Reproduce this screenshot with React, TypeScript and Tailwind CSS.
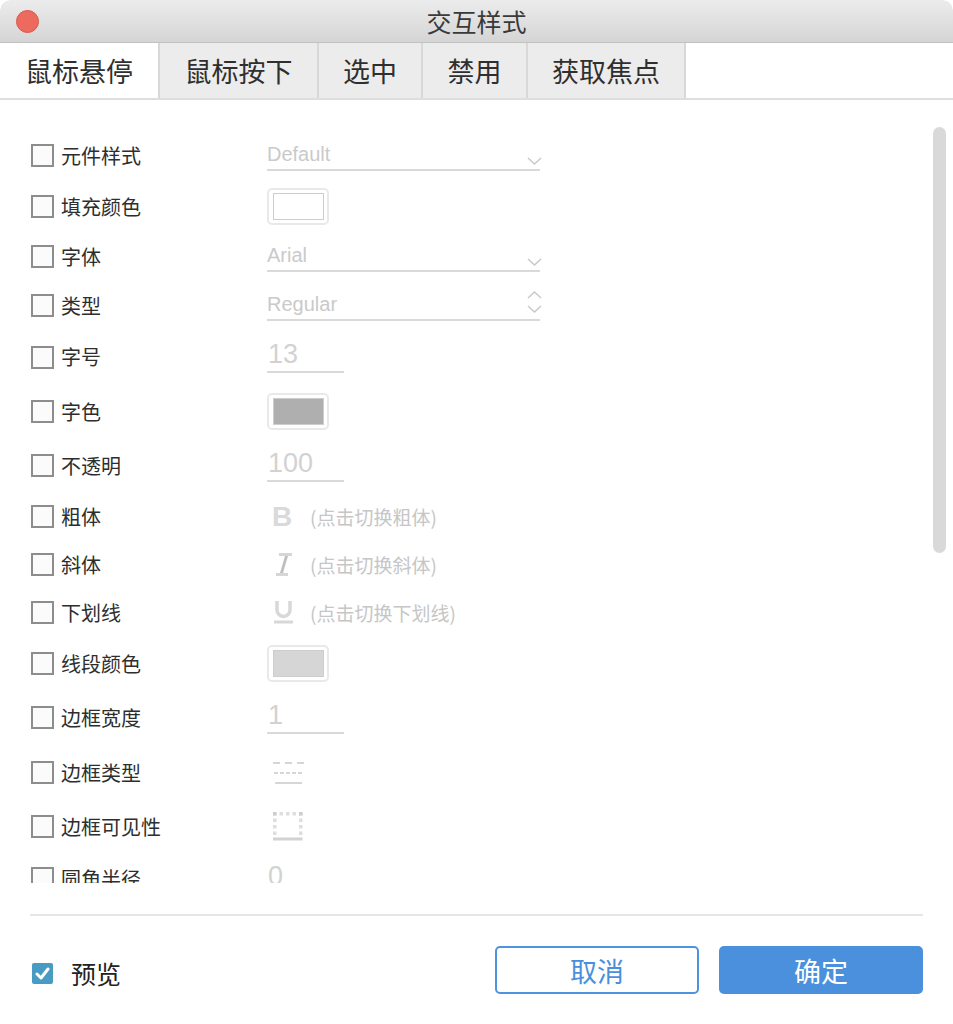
import React from "react";

const cjk = "font-['Noto_Sans_CJK_SC','Liberation_Sans',sans-serif]";
const latin = "font-['Liberation_Sans',sans-serif]";

function ChevronDown() {
  return (
    <svg width="15" height="8" viewBox="0 0 15 8" className="block">
      <polyline points="1,1 7.5,7 14,1" fill="none" stroke="#c9c9c9" strokeWidth="1.5" />
    </svg>
  );
}

function ChevronUp() {
  return (
    <svg width="15" height="8" viewBox="0 0 15 8" className="block">
      <polyline points="1,7 7.5,1 14,7" fill="none" stroke="#c9c9c9" strokeWidth="1.5" />
    </svg>
  );
}

function Dropdown({ value }: { value: string }) {
  return (
    <div className="w-[273px] h-[30px] border-b-2 border-[#d9d9d9] flex justify-between">
      <span className={`${latin} pt-[3px] text-[20px] leading-none text-[#cacaca]`}>{value}</span>
      <div className="mt-[16px] -mr-[2px]">
        <ChevronDown />
      </div>
    </div>
  );
}

function Stepper({ value }: { value: string }) {
  return (
    <div className="w-[273px] h-[30px] border-b-2 border-[#d9d9d9] flex justify-between">
      <span className={`${latin} pt-[3px] text-[20px] leading-none text-[#cacaca]`}>{value}</span>
      <div className="flex flex-col gap-[6px] -mr-[2px]">
        <ChevronUp />
        <ChevronDown />
      </div>
    </div>
  );
}

function NumberInput({ value }: { value: string }) {
  return (
    <div className="w-[77px] h-[32px] border-b-2 border-[#d9d9d9]">
      <span className={`${latin} block pl-[1px] text-[27px] leading-none text-[#d2d2d2]`}>{value}</span>
    </div>
  );
}

function Swatch({ fill }: { fill: string }) {
  return (
    <div className="w-[62px] h-[37px] rounded-[5px] border-2 border-[#e9e9e9] bg-white flex items-center justify-center">
      <div className={`w-[51px] h-[27px] border border-[#cdcdcd] ${fill}`} />
    </div>
  );
}

function Hint({ icon, text }: { icon: React.ReactNode; text: string }) {
  return (
    <div className="flex items-center">
      <div className="w-[43px] pl-[5px] flex items-center">{icon}</div>
      <span className={`${cjk} text-[19px] leading-none text-[#c6c6c6]`}>{text}</span>
    </div>
  );
}

function BoldIcon() {
  return <span className={`${latin} text-[28px] font-bold leading-none text-[#dadada]`}>B</span>;
}

function ItalicIcon() {
  return (
    <svg width="18" height="23" viewBox="0 0 18 23" className="block ml-[3px]">
      <rect x="4" y="0" width="13" height="3" fill="#d6d6d6" />
      <polygon points="10,3 13,3 8,20 5,20" fill="#bfbfbf" />
      <rect x="1" y="20" width="12" height="3" fill="#d6d6d6" />
    </svg>
  );
}

function UnderlineIcon() {
  return (
    <svg width="19" height="23" viewBox="0 0 19 23" className="block ml-[2px]">
      <path d="M3 0 V9 A6.5 6.5 0 0 0 16 9 V0" fill="none" stroke="#d8d8d8" strokeWidth="3.5" />
      <rect x="0" y="19.5" width="19" height="3" fill="#d8d8d8" />
    </svg>
  );
}

function BorderTypeIcon() {
  return (
    <svg width="32" height="24" viewBox="0 0 32 24" className="block ml-[6px]">
      <g fill="#d6d6d6">
        <rect x="0" y="1" width="7" height="2" />
        <rect x="12" y="1" width="7" height="2" />
        <rect x="24" y="1" width="7" height="2" />
        <rect x="1" y="11" width="4" height="2" />
        <rect x="7" y="11" width="4" height="2" />
        <rect x="13" y="11" width="4" height="2" />
        <rect x="19" y="11" width="4" height="2" />
        <rect x="25" y="11" width="4" height="2" />
        <rect x="2" y="21" width="27" height="2" />
      </g>
    </svg>
  );
}

function BorderVisibleIcon() {
  const dots = [];
  for (let i = 0; i < 5; i++) dots.push(<rect key={"t" + i} x={i * 6.5} y="0" width="3.5" height="3.5" />);
  for (let i = 1; i < 4; i++) {
    dots.push(<rect key={"l" + i} x="0" y={i * 6.5} width="3.5" height="3.5" />);
    dots.push(<rect key={"r" + i} x="26" y={i * 6.5} width="3.5" height="3.5" />);
  }
  return (
    <svg width="30" height="29" viewBox="0 0 30 29" className="block ml-[6px]">
      <g fill="#dedede">{dots}</g>
      <rect x="0" y="0" width="3.5" height="3.5" fill="#cdcdcd" />
      <rect x="26" y="0" width="3.5" height="3.5" fill="#cdcdcd" />
      <rect x="0" y="25.5" width="29.5" height="3" fill="#d2d2d2" />
    </svg>
  );
}

type Row = { label: string; h: string; ctrl: React.ReactNode };

const rows: Row[] = [
  { label: "元件样式", h: "h-[51px]", ctrl: <Dropdown value="Default" /> },
  { label: "填充颜色", h: "h-[51px]", ctrl: <Swatch fill="bg-white" /> },
  { label: "字体", h: "h-[49px]", ctrl: <Dropdown value="Arial" /> },
  { label: "类型", h: "h-[49px]", ctrl: <Stepper value="Regular" /> },
  { label: "字号", h: "h-[54px]", ctrl: <NumberInput value="13" /> },
  { label: "字色", h: "h-[55px]", ctrl: <Swatch fill="bg-[#afafaf]" /> },
  { label: "不透明", h: "h-[53px]", ctrl: <NumberInput value="100" /> },
  { label: "粗体", h: "h-[49px]", ctrl: <Hint icon={<BoldIcon />} text="(点击切换粗体)" /> },
  { label: "斜体", h: "h-[47px]", ctrl: <Hint icon={<ItalicIcon />} text="(点击切换斜体)" /> },
  { label: "下划线", h: "h-[49px]", ctrl: <Hint icon={<UnderlineIcon />} text="(点击切换下划线)" /> },
  { label: "线段颜色", h: "h-[53px]", ctrl: <Swatch fill="bg-[#d6d6d6]" /> },
  { label: "边框宽度", h: "h-[55px]", ctrl: <NumberInput value="1" /> },
  { label: "边框类型", h: "h-[55px]", ctrl: <BorderTypeIcon /> },
  { label: "边框可见性", h: "h-[53px]", ctrl: <BorderVisibleIcon /> },
  { label: "圆角半径", h: "h-[51px]", ctrl: <NumberInput value="0" /> },
];

const tabs = [
  { name: "鼠标悬停", w: "w-[160px]", active: true },
  { name: "鼠标按下", w: "w-[159px]", active: false },
  { name: "选中", w: "w-[104px]", active: false },
  { name: "禁用", w: "w-[105px]", active: false },
  { name: "获取焦点", w: "w-[158px]", active: false },
];

export default function App() {
  return (
    <div className={`${cjk} w-[953px] h-[1024px] bg-white flex flex-col overflow-hidden rounded-t-[10px]`}>
      {/* title bar */}
      <div className="relative h-[43px] shrink-0 bg-gradient-to-b from-[#ececec] to-[#d5d5d5] border-b border-[#c2c2c2] flex items-center justify-center rounded-t-[10px]">
        <div className="absolute left-[16px] top-[10px] w-[23px] h-[23px] rounded-full bg-[#ed6a5e] border border-[#d9584c]" />
        <span className="text-[25px] leading-none text-[#3a3a3a]">交互样式</span>
      </div>

      {/* tabs */}
      <div className="h-[57px] shrink-0 flex border-b-2 border-[#dedede] bg-white">
        {tabs.map((t) => (
          <div
            key={t.name}
            className={`${t.w} h-full flex items-center justify-center border-r-2 border-[#d8d8d8] text-[27px] leading-none text-[#2f2f2f] ${
              t.active ? "bg-white" : "bg-[#ececec]"
            }`}
          >
            {t.name}
          </div>
        ))}
      </div>

      {/* property list, clipped like the scroll view */}
      <div className="h-[783px] shrink-0 flex overflow-hidden">
        <div className="flex-1 flex flex-col pt-[30px] pl-[31px]">
          {rows.map((r) => (
            <div key={r.label} className={`${r.h} shrink-0 flex items-center`}>
              <div className="w-[23px] h-[23px] border-2 border-[#8d8d8d] bg-[#fbfbfb] shrink-0" />
              <span className="ml-[7px] w-[206px] text-[20px] leading-none text-[#2e2e2e]">{r.label}</span>
              {r.ctrl}
            </div>
          ))}
        </div>
        <div className="w-[13px] h-[426px] mt-[27px] mr-[7px] rounded-full bg-[#d9d9d9]" />
      </div>

      <div className="mt-[31px] mx-[30px] h-[2px] bg-[#e6e6e6] shrink-0" />

      {/* footer */}
      <div className="pt-[30px] pl-[32px] pr-[30px] flex items-center">
        <div className="mt-[7px] flex items-center">
          <div className="w-[21px] h-[21px] rounded-[2px] bg-[#4a9bc4] flex items-center justify-center">
            <svg width="15" height="13" viewBox="0 0 15 13">
              <polyline points="2,7 6,11 13,2" fill="none" stroke="white" strokeWidth="3" strokeLinecap="round" strokeLinejoin="round" />
            </svg>
          </div>
          <span className="ml-[18px] text-[25px] leading-none text-[#222]">预览</span>
        </div>
        <button className="ml-auto w-[204px] h-[48px] rounded-[5px] border-2 border-[#4d93e0] bg-white text-[27px] leading-none text-[#4a8fdc]">
          取消
        </button>
        <button className="ml-[20px] w-[204px] h-[48px] rounded-[5px] bg-[#4a90dc] text-[27px] leading-none text-white">
          确定
        </button>
      </div>
    </div>
  );
}
